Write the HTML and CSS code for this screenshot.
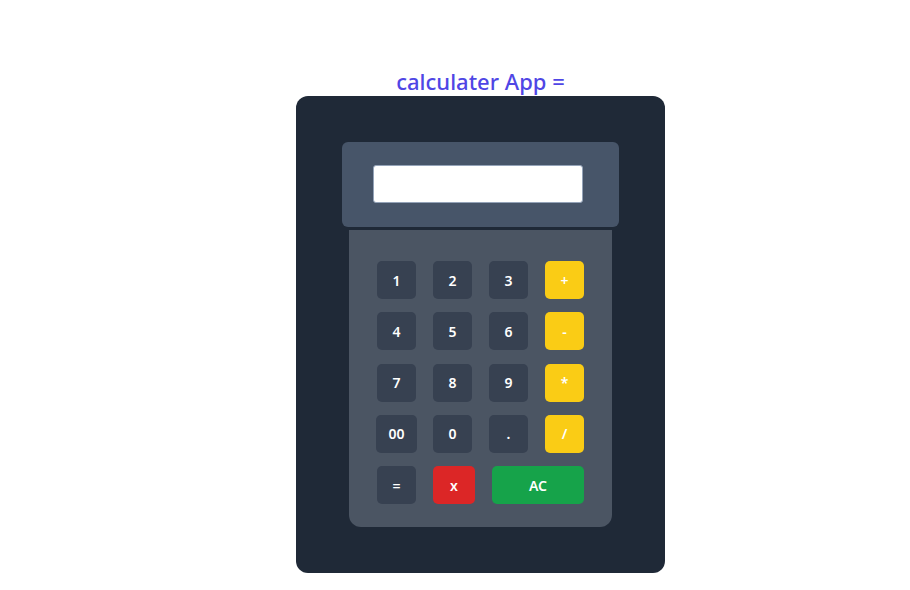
FILE: index.html
```html
<!DOCTYPE html>
<html lang="en">
<head>
<meta charset="utf-8">
<title>calculater App</title>
<link rel="stylesheet" href="styles.css">
</head>
<body>
<main class="page">
  <h1 class="title">calculater App =</h1>
  <div class="calc">
    <div class="screen">
      <input class="display" type="text" value="">
    </div>
    <div class="keypad">
      <button class="key">1</button>
      <button class="key">2</button>
      <button class="key">3</button>
      <button class="key op">+</button>
      <button class="key">4</button>
      <button class="key">5</button>
      <button class="key">6</button>
      <button class="key op">-</button>
      <button class="key">7</button>
      <button class="key">8</button>
      <button class="key">9</button>
      <button class="key op">*</button>
      <button class="key wide00">00</button>
      <button class="key">0</button>
      <button class="key">.</button>
      <button class="key op">/</button>
      <button class="key">=</button>
      <button class="key del">x</button>
      <button class="key clear">AC</button>
    </div>
  </div>
</main>
</body>
</html>
```
FILE: styles.css
```css
* { box-sizing: border-box; }
html, body { margin: 0; padding: 0; background: #ffffff; }
body { font-family: "Noto Sans", "Open Sans", "Liberation Sans", sans-serif; }

.page {
  display: flex;
  flex-direction: column;
  align-items: center;
  padding: 67px 0 0 51px;
}

.title {
  margin: 0;
  font-size: 22px;
  line-height: 29px;
  font-weight: 500;
  color: #4f46e5;
}

.calc {
  width: 369px;
  height: 477px;
  background: #1f2937;
  border-radius: 12px;
  padding: 46px 46px 0 46px;
  display: flex;
  flex-direction: column;
  align-items: center;
}

.screen {
  width: 277px;
  height: 85px;
  background: #475569;
  border-radius: 6px;
  padding: 23px 0 0 31px;
}

.display {
  display: block;
  width: 210px;
  height: 38px;
  border: 1px solid #94a3b8;
  border-radius: 3px;
  background: #ffffff;
  outline: none;
}

.keypad {
  margin-top: 3px;
  width: 263px;
  height: 297px;
  background: #4b5563;
  border-radius: 0 0 12px 12px;
  padding: 31px 28px 0 28px;
  display: grid;
  grid-template-columns: 39px 39px 39px 39px;
  grid-auto-rows: 38px;
  column-gap: 17px;
  row-gap: 13.3px;
  align-content: start;
}

.key {
  border: none;
  border-radius: 5px;
  background: #374151;
  color: #ffffff;
  font-family: inherit;
  font-size: 14px;
  font-weight: 600;
  padding: 0;
  cursor: pointer;
}

.key.op { background: #facc15; }
.key.wide00 { width: 41px; margin-left: -1px; }
.key.del { background: #dc2626; width: 42px; }
.key.clear {
  background: #16a34a;
  grid-column: 3 / span 2;
  width: 92px;
  justify-self: end;
}
```
